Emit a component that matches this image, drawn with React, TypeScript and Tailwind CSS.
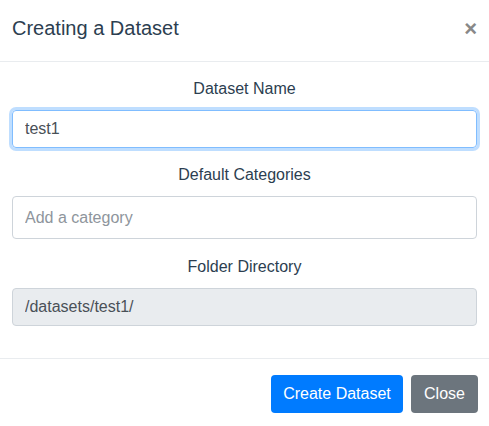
import React from "react";

export default function App() {
  return (
    <div
      className="w-[489px] h-[426px] bg-white text-[#2c3e50] overflow-hidden"
      style={{ fontFamily: '"Liberation Sans", Arial, sans-serif' }}
    >
      {/* header */}
      <div className="flex items-center justify-between h-[62px] px-3 border-b border-[#e9ecef]">
        <h5 className="text-[20px] leading-[30px] text-[#2c3e50] mt-[-5px]">Creating a Dataset</h5>
        <button className="text-[#888] text-[22px] font-bold leading-none mr-0 mt-[-3px]">×</button>
      </div>

      {/* body */}
      <div className="px-3 pt-[15px] pb-[32px] flex flex-col">
        <label className="text-center text-[16px] leading-6 mb-[9px]">Dataset Name</label>
        <input
          defaultValue="test1"
          className="h-[38px] w-full px-3 rounded-[4px] border border-[#80bdff] text-[16px] text-[#495057] outline-none shadow-[0_0_0_3px_rgba(0,123,255,0.25)]"
        />

        <label className="text-center text-[16px] leading-6 mt-[15px] mb-[9px]">Default Categories</label>
        <input
          placeholder="Add a category"
          className="h-[43px] w-full px-3 rounded-[4px] border border-[#ced4da] text-[16px] text-[#495057] outline-none placeholder:text-[#8e959c]"
        />

        <label className="text-center text-[16px] leading-6 mt-[16px] mb-[9px]">Folder Directory</label>
        <input
          disabled
          defaultValue="/datasets/test1/"
          className="h-[38px] w-full px-3 rounded-[4px] border border-[#ced4da] bg-[#e9ecef] text-[16px] text-[#495057] outline-none"
        />
      </div>

      {/* footer */}
      <div className="flex justify-end gap-2 px-[11px] pt-4 border-t border-[#e9ecef]">
        <button className="h-[38px] w-[132px] rounded-[4px] bg-[#007bff] text-white text-[16px]">Create Dataset</button>
        <button className="h-[38px] w-[67px] rounded-[4px] bg-[#6c757d] text-white text-[16px]">Close</button>
      </div>
    </div>
  );
}
